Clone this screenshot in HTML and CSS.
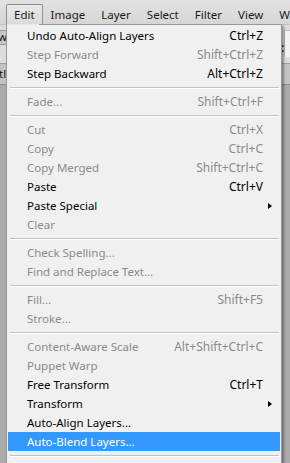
FILE: index.html
```html
<!DOCTYPE html>
<html>
<head>
<meta charset="utf-8">
<link rel="stylesheet" href="styles.css">
</head>
<body>
<div class="app">
  <div class="menubar">
    <span class="mb-item active">Edit</span>
    <span class="mb-item">Image</span>
    <span class="mb-item">Layer</span>
    <span class="mb-item">Select</span>
    <span class="mb-item">Filter</span>
    <span class="mb-item">View</span>
    <span class="mb-item">Window</span>
  </div>
  <div class="optbar">
    <div class="optrow">
      <span class="optbtn">w</span>
      <span class="spacer"></span>
      <span class="colon">:</span>
      <span class="optfield"></span>
    </div>
  </div>
  <div class="tabbar">
    <span class="tab">tl</span>
  </div>
  <div class="workspace"></div>

  <div class="menu">
    <div class="item"><span class="lbl">Undo Auto-Align Layers</span><span class="key">Ctrl+Z</span><span class="arr"></span></div>
    <div class="item dis"><span class="lbl">Step Forward</span><span class="key">Shift+Ctrl+Z</span><span class="arr"></span></div>
    <div class="item"><span class="lbl">Step Backward</span><span class="key">Alt+Ctrl+Z</span><span class="arr"></span></div>
    <div class="sep"></div>
    <div class="item dis"><span class="lbl">Fade...</span><span class="key">Shift+Ctrl+F</span><span class="arr"></span></div>
    <div class="sep"></div>
    <div class="item dis"><span class="lbl">Cut</span><span class="key">Ctrl+X</span><span class="arr"></span></div>
    <div class="item dis"><span class="lbl">Copy</span><span class="key">Ctrl+C</span><span class="arr"></span></div>
    <div class="item dis"><span class="lbl">Copy Merged</span><span class="key">Shift+Ctrl+C</span><span class="arr"></span></div>
    <div class="item"><span class="lbl">Paste</span><span class="key">Ctrl+V</span><span class="arr"></span></div>
    <div class="item sub"><span class="lbl">Paste Special</span><span class="key"></span><span class="arr"></span></div>
    <div class="item dis"><span class="lbl">Clear</span><span class="key"></span><span class="arr"></span></div>
    <div class="sep"></div>
    <div class="item dis"><span class="lbl">Check Spelling...</span><span class="key"></span><span class="arr"></span></div>
    <div class="item dis"><span class="lbl">Find and Replace Text...</span><span class="key"></span><span class="arr"></span></div>
    <div class="sep"></div>
    <div class="item dis"><span class="lbl">Fill...</span><span class="key">Shift+F5</span><span class="arr"></span></div>
    <div class="item dis"><span class="lbl">Stroke...</span><span class="key"></span><span class="arr"></span></div>
    <div class="sep"></div>
    <div class="item dis"><span class="lbl">Content-Aware Scale</span><span class="key">Alt+Shift+Ctrl+C</span><span class="arr"></span></div>
    <div class="item dis"><span class="lbl">Puppet Warp</span><span class="key"></span><span class="arr"></span></div>
    <div class="item"><span class="lbl">Free Transform</span><span class="key">Ctrl+T</span><span class="arr"></span></div>
    <div class="item sub"><span class="lbl">Transform</span><span class="key"></span><span class="arr"></span></div>
    <div class="item"><span class="lbl">Auto-Align Layers...</span><span class="key"></span><span class="arr"></span></div>
    <div class="item hl"><span class="lbl">Auto-Blend Layers...</span><span class="key"></span><span class="arr"></span></div>
    <div class="sep"></div>
    <div class="tail"></div>
  </div>
</div>
</body>
</html>
```

FILE: styles.css
```css
html, body {
  margin: 0;
  padding: 0;
}
body {
  width: 290px;
  height: 463px;
  overflow: hidden;
  background: #a9a9a9;
  font-family: "Noto Sans", "Open Sans", sans-serif;
  font-size: 11.5px;
  color: #000;
}
.app {
  position: relative;
  width: 290px;
  height: 463px;
  display: flex;
  flex-direction: column;
}
.menubar {
  height: 24px;
  flex: none;
  display: flex;
  align-items: flex-end;
  padding-left: 6px;
  background: linear-gradient(#e2e2e2, #d6d6d6);
  white-space: nowrap;
  overflow: hidden;
}
.mb-item {
  height: 19px;
  line-height: 19px;
  padding: 0 7px;
  border: 1px solid transparent;
  border-bottom: 0;
  color: #1a1a1a;
}
.mb-item.active {
  border-color: #8e8e8e;
  border-radius: 2px 2px 0 0;
  background: linear-gradient(#e9e9e9, #dadada);
}
.optbar {
  height: 38px;
  flex: none;
  background: #dcdcdc;
  border-top: 1px solid #c4c4c4;
}
.optrow {
  display: flex;
  align-items: flex-start;
  padding-top: 5px;
}
.optbtn {
  height: 13px;
  line-height: 12px;
  width: 7px;
  overflow: hidden;
  background: #c6c6c6;
  border-top: 1px solid #9a9a9a;
  border-bottom: 1px solid #9a9a9a;
  text-indent: -2px;
  color: #111;
}
.spacer {
  flex: 1;
}
.colon {
  margin-top: 12px;
  line-height: 12px;
  width: 3px;
  font-weight: bold;
  color: #333;
}
.optfield {
  width: 5px;
  height: 26px;
  background: #f3f3f3;
  border-left: 1px solid #b9b9b9;
  border-top: 1px solid #b9b9b9;
}
.tabbar {
  height: 20px;
  flex: none;
  background: #c3c3c3;
  border-top: 1px solid #9c9c9c;
  border-bottom: 1px solid #8c8c8c;
  display: flex;
}
.tab {
  line-height: 19px;
  text-indent: -1px;
  color: #111;
  width: 8px;
  overflow: hidden;
}
.workspace {
  flex: 1;
  background: #ababab;
}

.menu {
  position: absolute;
  left: 6px;
  top: 24px;
  width: 272px;
  padding: 1px 1px 0 1px;
  background: #f0f0f0;
  border: 1px solid #979797;
  box-shadow: 2px 2px 2px rgba(0, 0, 0, 0.35);
}
.menu::before {
  content: "";
  position: absolute;
  left: 0;
  top: -1px;
  width: 32px;
  height: 1px;
  background: #e8e8e8;
}
.item {
  display: grid;
  grid-template-columns: 1fr auto 17px;
  height: 19px;
  line-height: 19px;
  padding-left: 19px;
  white-space: nowrap;
  color: #000;
}
.item.dis {
  color: #8a8a8a;
}
.item.hl {
  background: #3399ff;
  color: #fff;
}
.key {
  text-align: right;
  font-size: 12px;
}
.item.sub .arr::after {
  content: "";
  display: block;
  width: 0;
  height: 0;
  margin: 7px 0 0 5px;
  border-left: 4px solid #000;
  border-top: 3.5px solid transparent;
  border-bottom: 3.5px solid transparent;
}
.sep {
  margin: 4px 1px 3px 2px;
  height: 0;
  border-top: 1px solid #c2c2c2;
  border-bottom: 1px solid #ffffff;
}
.tail {
  height: 19px;
}
```
